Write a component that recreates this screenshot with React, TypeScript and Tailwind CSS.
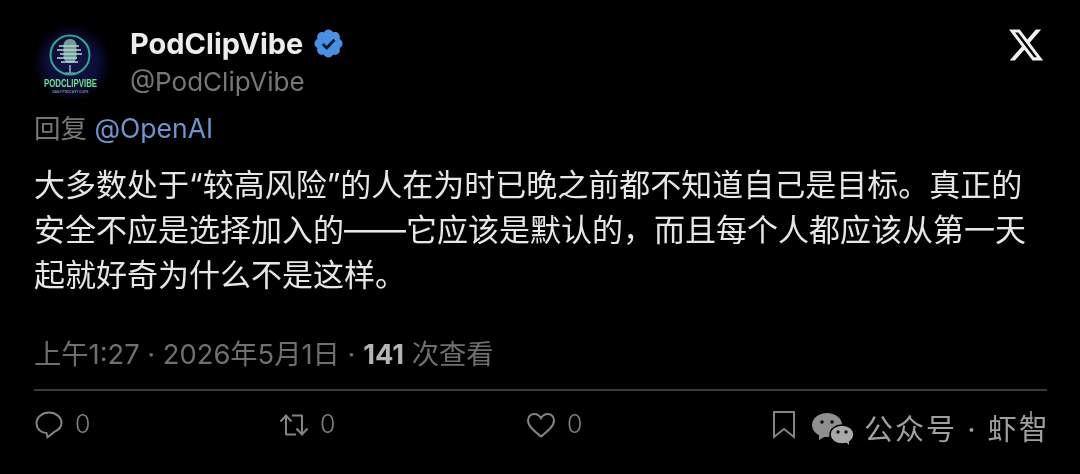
const cjk = "font-['Inter','Noto_Sans_CJK_SC',sans-serif]"

function Avatar() {
  return (
    <svg viewBox="0 0 76 76" className="w-[76px] h-[76px] shrink-0 overflow-visible">
      <defs>
        <radialGradient id="glow">
          <stop offset="0%" stopColor="#14144a" />
          <stop offset="65%" stopColor="#0d0d38" />
          <stop offset="100%" stopColor="#000004" />
        </radialGradient>
      </defs>
      <circle cx="38" cy="38" r="38" fill="url(#glow)" />
      <circle cx="36" cy="30" r="19.5" fill="none" stroke="#2fa894" strokeWidth="2" />
      <rect x="29.5" y="14" width="13" height="24" rx="6" fill="#6f9f98" />
      <path d="M25 21h20M23 25h24M26 29h22M23 33h20M27 37h17" stroke="#b5d8d0" strokeWidth="1.4" />
      <path d="M36 40v8" stroke="#7fb5aa" strokeWidth="1.6" />
      <path d="M31 48h10" stroke="#7fb5aa" strokeWidth="1" />
      <text x="36.500" y="62" textAnchor="middle" fontFamily="Liberation Sans, sans-serif" fontWeight="700" fontSize="11" fill="#6fe08a" textLength="53" lengthAdjust="spacingAndGlyphs">PODCLIPVIBE</text>
      <text x="36.500" y="68" textAnchor="middle" fontFamily="Liberation Sans, sans-serif" fontWeight="700" fontSize="3" fill="#8a8a90" textLength="36" lengthAdjust="spacingAndGlyphs">DAILY PODCAST CLIPS</text>
    </svg>
  )
}

function Verified() {
  return (
    <svg viewBox="0 0 24 24" className="w-[33px] h-[33px] shrink-0">
      <path fill="#4a90e2" d="M22.25 12c0-1.43-.88-2.67-2.19-3.34.46-1.39.2-2.9-.81-3.91s-2.52-1.27-3.91-.81c-.66-1.31-1.91-2.19-3.34-2.19s-2.67.88-3.33 2.19c-1.4-.46-2.91-.2-3.92.81s-1.26 2.52-.8 3.91C2.63 9.33 1.75 10.57 1.75 12s.88 2.67 2.2 3.34c-.46 1.39-.21 2.9.8 3.91s2.52 1.26 3.91.81c.67 1.31 1.91 2.19 3.34 2.19s2.68-.88 3.34-2.19c1.39.45 2.9.2 3.91-.81s1.27-2.52.81-3.91c1.31-.67 2.19-1.91 2.19-3.34z" />
      <path d="M7.8 12.4l2.9 2.9 5.6-6" fill="none" stroke="#0c1a30" strokeWidth="2.1" />
    </svg>
  )
}

function XLogo() {
  return (
    <svg viewBox="0 0 24 24" className="w-[38px] h-[38px] shrink-0" fill="#f0f0f0">
      <path d="M18.244 2.25h3.308l-7.227 8.26 8.502 11.24H16.170l-5.214-6.817L4.990 21.750H1.680l7.730-8.835L1.254 2.250H8.080l4.713 6.231zm-1.161 17.520h1.833L7.084 4.126H5.117z" />
    </svg>
  )
}

function Stat({ icon, value }: { icon: React.ReactNode; value: string }) {
  return (
    <div className="w-[246px] flex items-center gap-[11px] text-[#7d7d7d] text-[25px] font-['Inter',sans-serif] font-light">
      {icon}
      {value && <span>{value}</span>}
    </div>
  )
}

const iconProps = {
  fill: 'none',
  stroke: '#848484',
  strokeWidth: 2,
  viewBox: '0 0 30 30',
  className: 'w-[30px] h-[30px] shrink-0',
}

export default function App() {
  return (
    <div className={`w-[1080px] h-[474px] bg-black overflow-hidden relative pt-[25px] px-[34px] blur-[0.5px] ${cjk}`}>
      <div className="flex items-start">
        <Avatar />
        <div className="ml-[20px] flex flex-col">
          <div className="flex items-center gap-[9px] h-[36px]">
            <span className="text-[29px] font-bold text-[#ececec] leading-none">PodClipVibe</span>
            <Verified />
          </div>
          <span className="text-[26px] text-[#777777] leading-none mt-[8px]">@PodClipVibe</span>
        </div>
        <div className="ml-auto mr-[1px] mt-[1px]">
          <XLogo />
        </div>
      </div>

      <div className="text-[26.5px] leading-[30px] mt-[12px] text-[#777777]">
        回复 <span className="text-[#6f94cf]">@OpenAI</span>
      </div>

      <div className="text-[31px] leading-[45px] text-[#e6e6e6] mt-[19px] w-[1000px]">
        <div>大多数处于“较高风险”的人在为时已晚之前都不知道自己是目标。真正的</div>
        <div>安全不应是选择加入的——它应该是默认的，而且每个人都应该从第一天</div>
        <div>起就好奇为什么不是这样。</div>
      </div>

      <div className="mt-[42px] text-[27.3px] leading-[32px] text-[#6f6f6f]">
        上午1:27 · 2026年5月1日 · <span className="font-bold text-[#b4b4b4]">141</span> 次查看
      </div>

      <div className="h-[2px] bg-[#3a3a3a] w-[1013px] mt-[18px]" />

      <div className="flex items-center mt-[15px]">
        <Stat
          value="0"
          icon={
            <svg {...iconProps}>
              <path d="M15 2.500c-7 0-12.500 4.800-12.500 10.800 0 5.500 4.600 9.500 10 9.800l1 4.200 6.800-5.400c4.200-1.800 7.200-5 7.200-8.800C27.500 7.300 22 2.500 15 2.500z" />
            </svg>
          }
        />
        <Stat
          value="0"
          icon={
            <svg {...iconProps} className="w-[30px] h-[30px] shrink-0 -ml-[1px]">
              <path d="M7 25V6.500M1.500 11.500L7 5.500l5.500 6M7 24.500h10M23 5v19M17.500 18.500l5.500 6 5.500-6M23 5.500H13" />
            </svg>
          }
        />
        <Stat
          value="0"
          icon={
            <svg {...iconProps}>
              <path d="M15 26.500C9 21.500 2 16.500 2 10.500 2 6.500 5 4 8.300 4c2.800 0 5.200 1.500 6.700 4.200C16.500 5.500 18.900 4 21.700 4 25 4 28 6.500 28 10.500c0 6-7 11-13 16z" />
            </svg>
          }
        />
        <Stat
          value=""
          icon={
            <svg {...iconProps} viewBox="0 0 24 30" className="w-[24px] h-[30px] shrink-0">
              <path d="M2 2h20v25l-10-8-10 8z" />
            </svg>
          }
        />
      </div>

      {/* share icon sits under the watermark */}
      <div className="absolute left-[1030px] top-[411px] w-[2px] h-[12px] bg-[#7d7d7d]" />

      {/* watermark */}
      <div className="absolute left-[812px] top-[413px] flex items-center text-[#a0a0a0] text-[29px] leading-none">
        <svg viewBox="0 0 42 32" className="w-[42px] h-[32px] shrink-0">
          <ellipse cx="15" cy="12" rx="15" ry="12" fill="#8f8f8f" />
          <path d="M7 20l0 7 7-4z" fill="#8f8f8f" />
          <circle cx="10" cy="9" r="1.800" fill="#111" />
          <circle cx="20" cy="9" r="1.800" fill="#111" />
          <ellipse cx="30" cy="21.500" rx="12" ry="9.500" fill="#a8a8a8" stroke="#000" strokeWidth="1.500" />
          <path d="M34 29l3 3 0-5z" fill="#a8a8a8" />
          <circle cx="26" cy="19" r="1.700" fill="#111" />
          <circle cx="34" cy="19" r="1.700" fill="#111" />
        </svg>
        <span className="ml-[10px] whitespace-nowrap tracking-[2px]">公众号 · 虾智</span>
      </div>
    </div>
  )
}
